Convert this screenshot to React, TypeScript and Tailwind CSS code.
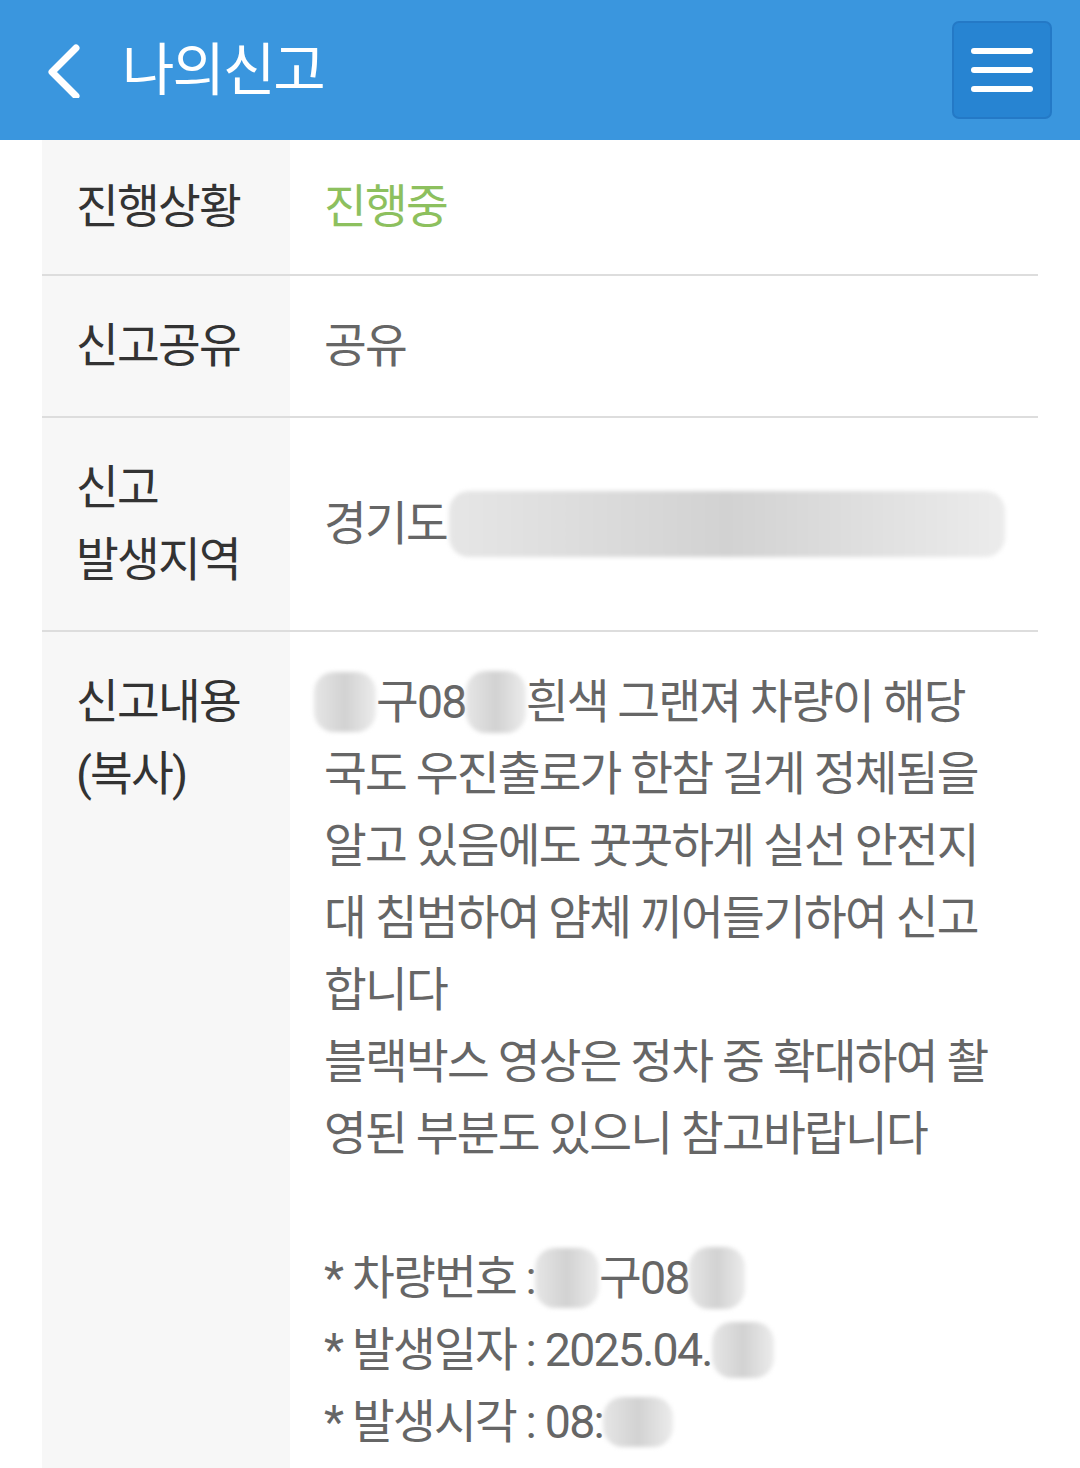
import React from "react";

const font = { fontFamily: "Roboto, 'Noto Sans CJK KR', sans-serif" };

function Blob({ w, h = 56, className = "" }: { w: number; h?: number; className?: string }) {
  return (
    <span
      className={`inline-block align-middle rounded-[20px] bg-gradient-to-r from-[#e6e6e6] via-[#d2d2d2] to-[#ececec] blur-[2px] ${className}`}
      style={{ width: w, height: h }}
    />
  );
}

function Row({
  label,
  children,
  center = true,
  pad = "py-[34px]",
}: {
  label: React.ReactNode;
  children: React.ReactNode;
  center?: boolean;
  pad?: string;
}) {
  return (
    <div className="flex border-b-2 border-[#dddddd]">
      <div className={`w-[248px] shrink-0 bg-[#f7f7f7] px-[34px] text-[#333333] ${pad}`}>{label}</div>
      <div className={`flex-1 px-[34px] text-[#666666] flex ${pad} ${center ? "items-center" : "items-start"}`}>
        {children}
      </div>
    </div>
  );
}

export default function App() {
  const lines = [
    "국도 우진출로가 한참 길게 정체됨을",
    "알고 있음에도 꿋꿋하게 실선 안전지",
    "대 침범하여 얌체 끼어들기하여 신고",
    "합니다",
    "블랙박스 영상은 정차 중 확대하여 촬",
    "영된 부분도 있으니 참고바랍니다",
  ];

  return (
    <div className="w-[1080px] h-[1468px] overflow-hidden bg-white" style={font}>
      {/* 헤더 */}
      <div className="h-[140px] bg-[#3a96de] flex items-center justify-between pl-[44px] pr-[28px]">
        <div className="flex items-center gap-[38px]">
          <svg width="40" height="56" viewBox="0 0 40 56" fill="none">
            <polyline
              points="32,6 8,30 32,54"
              stroke="white"
              strokeWidth="7"
              strokeLinecap="round"
              strokeLinejoin="round"
            />
          </svg>
          <span className="text-white text-[57px] tracking-[-2px] leading-none">나의신고</span>
        </div>
        <button className="w-[100px] h-[98px] rounded-[7px] bg-[#2784d2] border-2 border-[#2479c6] flex flex-col items-center justify-center gap-[13px]">
          <span className="block w-[62px] h-[6px] rounded-full bg-white" />
          <span className="block w-[62px] h-[6px] rounded-full bg-white" />
          <span className="block w-[62px] h-[6px] rounded-full bg-white" />
        </button>
      </div>

      {/* 신고 정보 */}
      <div className="mx-[42px] text-[46.5px] leading-[72px] tracking-[-1.8px]">
        <Row label="진행상황" pad="py-[31px]">
          <span className="text-[#8dc05e]">진행중</span>
        </Row>
        <Row label="신고공유">
          <span>공유</span>
        </Row>
        <Row
          label={
            <>
              신고
              <br />
              발생지역
            </>
          }
        >
          <span className="flex items-center whitespace-nowrap">
            경기도
            <Blob w={556} h={66} className="ml-[2px]" />
          </span>
        </Row>
        <Row
          center={false}
          label={
            <>
              신고내용
              <br />
              (복사)
            </>
          }
        >
          <div className="whitespace-nowrap">
            <div className="flex items-center">
              <Blob w={62} h={60} className="-ml-[10px]" />
              <span>구08</span>
              <Blob w={60} h={62} />
              <span>흰색 그랜져 차량이 해당</span>
            </div>
            {lines.map((l) => (
              <div key={l}>{l}</div>
            ))}
            <div>&nbsp;</div>
            <div className="flex items-center">
              <span>* 차량번호 : </span>
              <Blob w={64} h={60} />
              <span>구08</span>
              <Blob w={56} h={62} />
            </div>
            <div className="flex items-center">
              <span>* 발생일자 : 2025.04.</span>
              <Blob w={62} h={56} />
            </div>
            <div className="flex items-center">
              <span>* 발생시각 : 08:</span>
              <Blob w={70} h={50} />
            </div>
          </div>
        </Row>
      </div>
    </div>
  );
}
